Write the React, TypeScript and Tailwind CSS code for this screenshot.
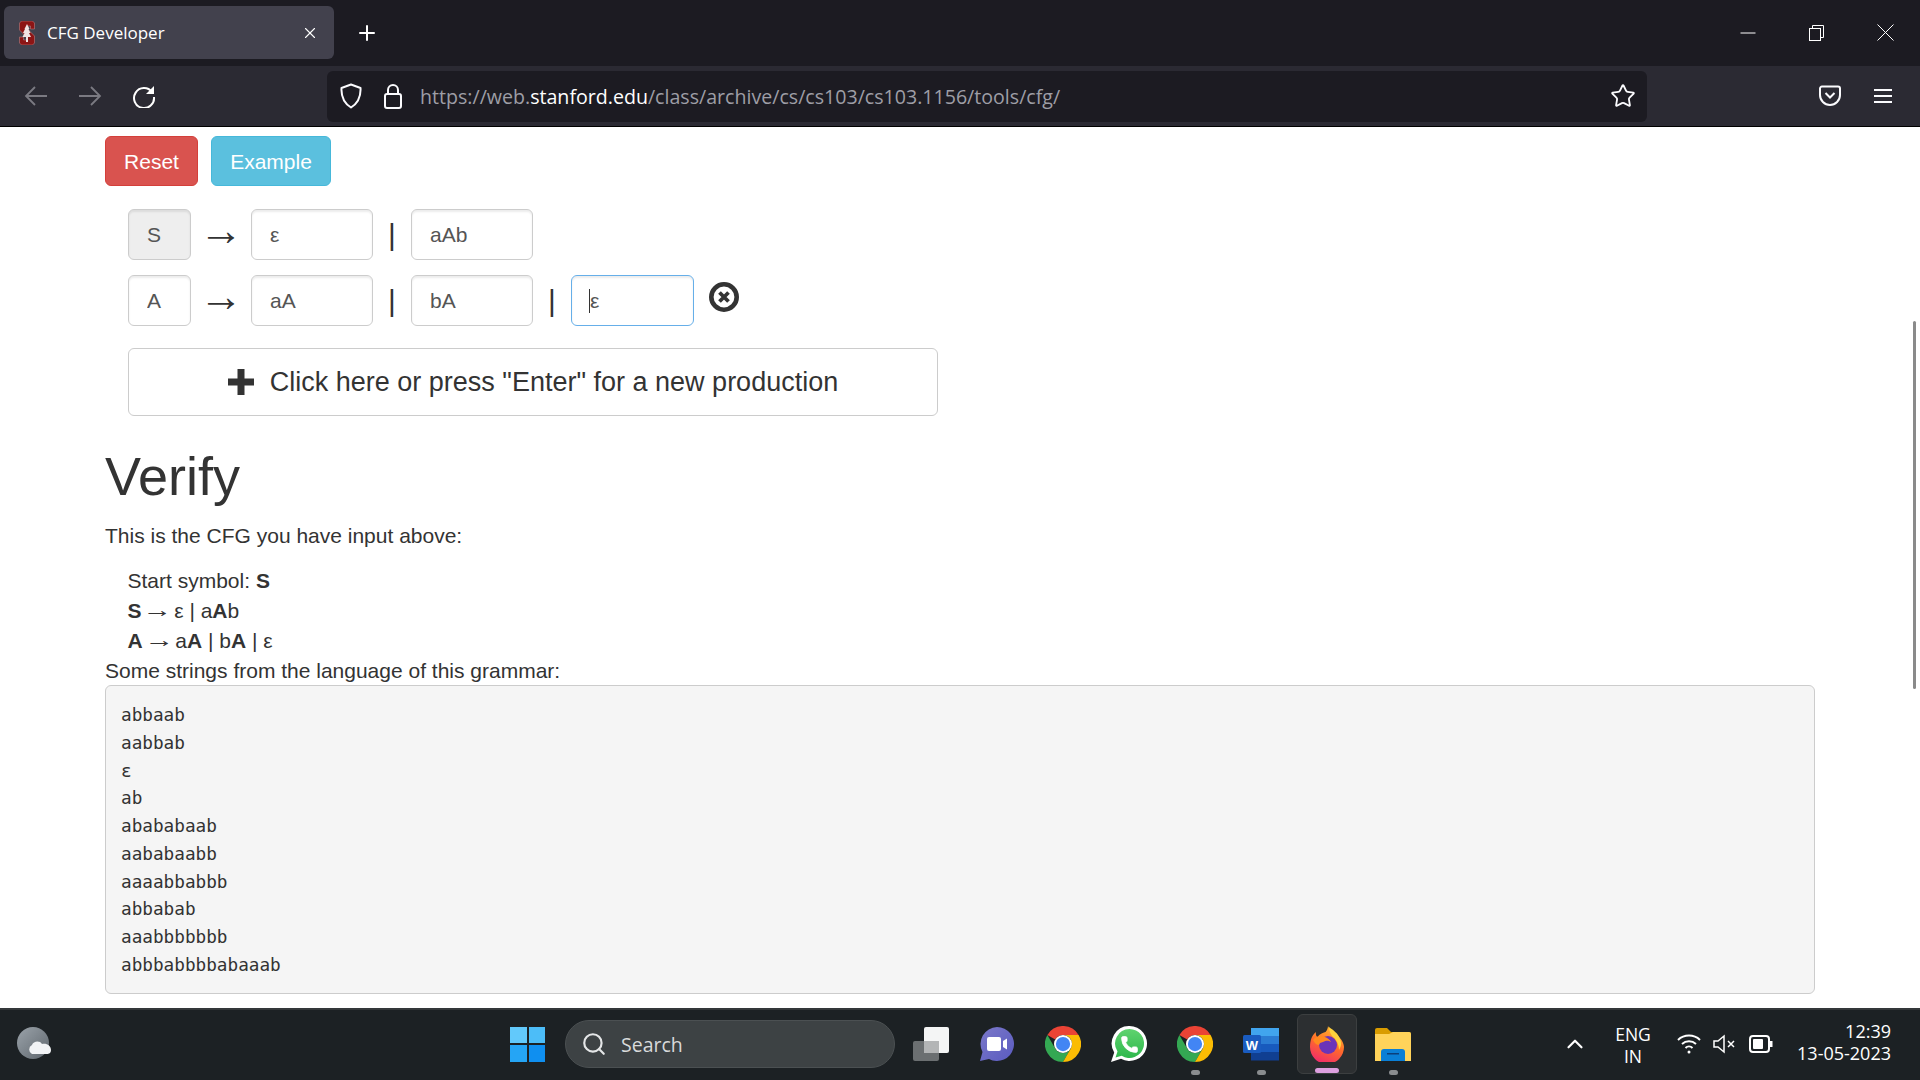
import React from 'react';
import { Phone, Search, Star, X, Plus, ChevronUp } from 'lucide-react';

const strings = [
  'abbaab',
  'aabbab',
  'ε',
  'ab',
  'abababaab',
  'aababaabb',
  'aaaabbabbb',
  'abbabab',
  'aaabbbbbbb',
  'abbbabbbbabaaab',
];

const fieldClass =
  'h-[51px] w-[122px] rounded-[6px] border border-[#ccc] bg-white px-[18px] text-[21px] text-[#555] shadow-[inset_0_2px_2px_rgba(0,0,0,0.075)] outline-none';

const Arrow = () => (
  <span className="w-[60px] text-center text-[44px] leading-[42px] font-light text-[#333]">→</span>
);
const Bar = () => <span className="w-[38px] text-center text-[30px] leading-[51px] text-[#333]">|</span>;
// the arrow glyph in the reference is wider than its advance suggests
const InlineArrow = () => <span className="mr-[5.830px] inline-block -translate-y-px scale-x-[1.4]">→</span>;

const StanfordIcon = () => (
  <svg width="16" height="24" viewBox="0 0 15 24">
    <path d="M2 0h11l2 2v6h-4V5H8v3l7 7v7l-2 2H2l-2-2v-6h4v3h3v-3L0 9V2z" fill="#8c1515" stroke="#c98a8a" strokeWidth="0.500" />
    <path d="M7.500 3 10 8H9l2 4h-1.500l2 4H8.500v5h-2v-5H3l2-4H3.500l2-4H5z" fill="#f0e4e4" />
  </svg>
);

const ChromeIcon = () => (
  <svg width="36" height="36" viewBox="0 0 48 48">
    <path d="M3.200 12A24 24 0 0 1 44.800 12H24A12 12 0 0 0 13.600 18z" fill="#ea4335" />
    <path d="M3.200 12 13.600 30A12 12 0 0 0 34.400 30L24 48A24 24 0 0 1 3.200 12z" fill="#34a853" />
    <path d="M44.800 12H24A12 12 0 0 1 34.400 30L24 48A24 24 0 0 0 44.800 12z" fill="#fbbc04" />
    <circle cx="24" cy="24" r="12" fill="#fff" />
    <circle cx="24" cy="24" r="9.500" fill="#4285f4" />
  </svg>
);

const TeamsIcon = () => (
  <svg width="36" height="36" viewBox="0 0 36 36">
    <defs>
      <linearGradient id="teamsFill" x1="0" y1="0" x2="1" y2="1">
        <stop offset="0" stopColor="#7b78c9" />
        <stop offset="1" stopColor="#5a5bc0" />
      </linearGradient>
    </defs>
    <path d="M18 1a17 17 0 1 1-8 32L1 35l2.500-9A17 17 0 0 1 18 1z" fill="url(#teamsFill)" />
    <rect x="8" y="11" width="14" height="14" rx="2" fill="#fff" />
    <path d="m24 15 4-2.500v11L24 21z" fill="#fff" />
  </svg>
);

const WhatsAppIcon = () => (
  <svg width="36" height="37" viewBox="0 0 36 37">
    <defs>
      <linearGradient id="waFill" x1="0" y1="0" x2="0" y2="1">
        <stop offset="0" stopColor="#5fd36f" />
        <stop offset="1" stopColor="#2fb84c" />
      </linearGradient>
    </defs>
    <path d="M18.500 0a17.500 17.500 0 1 1-8.500 32.800L0 36l3.200-9.500A17.500 17.500 0 0 1 18.500 0z" fill="#fff" />
    <path d="M18.500 3a14.500 14.500 0 1 1-7.800 26.700L4.500 31.500l2-6A14.500 14.500 0 0 1 18.500 3z" fill="url(#waFill)" />
    <Phone x="9" y="9" width="19" height="19" fill="#fff" stroke="#fff" strokeWidth={1} />
  </svg>
);

const WordIcon = () => (
  <svg width="36" height="33" viewBox="0 0 36 33">
    <rect x="8" y="0" width="28" height="8" fill="#41a5ee" />
    <rect x="8" y="8" width="28" height="8" fill="#2b7cd3" />
    <rect x="8" y="16" width="28" height="8" fill="#185abd" />
    <rect x="8" y="24" width="28" height="8.500" fill="#103f91" />
    <rect x="0" y="7" width="18" height="18" rx="1.500" fill="#1a5cc0" />
    <text x="9" y="21.500" textAnchor="middle" fontSize="13" fontWeight="700" fill="#fff" fontFamily="Liberation Sans, sans-serif">
      W
    </text>
  </svg>
);

const FirefoxIcon = () => (
  <svg width="36" height="36" viewBox="0 0 36 36">
    <defs>
      <linearGradient id="foxFill" x1="0.7" y1="0" x2="0.3" y2="1">
        <stop offset="0" stopColor="#ffbd2e" />
        <stop offset="0.5" stopColor="#ff6a2b" />
        <stop offset="1" stopColor="#f0286e" />
      </linearGradient>
    </defs>
    <path d="M19 0c1 3 5 5 8 8 6 5 8 10 8 13a17 17 0 0 1-34 0C1 14 3 9 7 6c-.5 3 .5 4 1.500 5 2-3 5-4 8-5 1.500-1.500 2.500-4 2.500-6z" fill="url(#foxFill)" />
    <circle cx="19" cy="19" r="9" fill="#6b34b8" />
    <path d="M4 14c3-4 8-5 12-3 3 1 5 3 6 5-3-2-5-1.500-8 0l-3 1-1 2c-2 0-4-1-6-5z" fill="#ff8a1f" />
    <path d="M20 1c4 3 9 6 11 12 2 4 1 8-1 11 0-6-3-11-7-14-2-3-3-6-3-9z" fill="#ffd23c" />
  </svg>
);

const FolderIcon = () => (
  <svg width="36" height="33" viewBox="0 0 36 33">
    <path d="M0 2a2 2 0 0 1 2-2h10l4 4h18a2 2 0 0 1 2 2v6H0z" fill="#d99c00" />
    <path d="M0 6h14l4-2h16a2 2 0 0 1 2 2v27H0z" fill="#ffd35a" />
    <path d="M6 33V24a3 3 0 0 1 3-3h18a3 3 0 0 1 3 3v9z" fill="#0a7fd6" />
    <rect x="12" y="25" width="12" height="1.500" fill="#0b3f7a" />
  </svg>
);

// items on the taskbar are all 66px slots, with the running dot under them
const TaskItem = ({ children, dot }: { children: React.ReactNode; dot?: boolean }) => (
  <div className="relative flex h-[60px] w-[66px] items-center justify-center">
    {children}
    {dot && <span className="absolute -bottom-[1px] h-[5px] w-[9px] rounded-full bg-[#8a8d8f]" />}
  </div>
);

const App = () => {
  return (
    <div className="flex h-screen w-full flex-col overflow-hidden bg-white font-['Liberation_Sans',sans-serif] text-[21px] leading-[30px] text-[#333]">
      {/* Tab strip */}
      <div className="flex h-[66px] shrink-0 items-center bg-[#1c1b22] pl-[4px] pb-[1px] font-['Open_Sans',sans-serif]">
        <div className="flex h-[53px] w-[330px] items-center rounded-[6px] bg-[#42414d] pl-[15px] pr-[15px] text-white">
          <StanfordIcon />
          <span className="ml-[12px] flex-1 text-[17px]">CFG Developer</span>
          <X size={18} strokeWidth={1.500} />
        </div>
        <Plus size={24} strokeWidth={2} className="ml-[21px] text-white" />
        <div className="ml-auto flex items-center pr-[26px] text-white">
          <svg width="16" height="16" viewBox="0 0 16 16" className="mr-[53px]">
            <path d="M0.500 8h15" stroke="#fff" strokeWidth="1" />
          </svg>
          <svg width="15" height="16" viewBox="0 0 15 16" className="mr-[53px]" fill="none" stroke="#fff" strokeWidth="1">
            <rect x="0.500" y="3.500" width="11" height="12" />
            <path d="M3.500 3.500v-3h11v12h-3" />
          </svg>
          <svg width="17" height="17" viewBox="0 0 17 17">
            <path d="M0.500 0.500l16 16M16.500 0.500l-16 16" stroke="#fff" strokeWidth="1" />
          </svg>
        </div>
      </div>

      {/* Toolbar */}
      <div className="flex h-[61px] shrink-0 items-center border-b border-black bg-[#2b2a33] font-['Open_Sans',sans-serif]">
        <svg width="24" height="24" viewBox="0 0 24 24" fill="none" stroke="#7b7a82" strokeWidth="1.800" className="ml-[24px]">
          <path d="M23 12H2M11 3l-9 9 9 9" />
        </svg>
        <svg width="24" height="24" viewBox="0 0 24 24" fill="none" stroke="#7b7a82" strokeWidth="1.800" className="ml-[30px]">
          <path d="M1 12h21M13 3l9 9-9 9" />
        </svg>
        <svg width="24" height="24" viewBox="0 0 24 24" fill="none" stroke="#fff" strokeWidth="2" className="ml-[30px]">
          <path d="M20 8A10 10 0 1 0 22 13" />
          <path d="M22 2v8h-8z" fill="#fff" stroke="none" />
        </svg>
        <div className="ml-[171px] flex h-[51px] w-[1320px] items-center rounded-[6px] bg-[#1c1b22] pl-[13px] pr-[11px]">
          <svg width="22" height="26" viewBox="0 0 22 26" fill="none" stroke="#fbfbfe" strokeWidth="2">
            <path d="M11 1.500 20.500 5c.5 9-2.500 15-9.500 19.500C4 20 1 14 1.500 5z" strokeLinejoin="round" />
          </svg>
          <svg width="18" height="25" viewBox="0 0 18 25" fill="none" stroke="#fbfbfe" strokeWidth="2" className="ml-[22px]">
            <rect x="1" y="10" width="16" height="14" rx="2" />
            <path d="M4 10V6a5 5 0 0 1 10 0v4" />
          </svg>
          <span className="ml-[18px] pt-[2px] text-[19.600px] whitespace-nowrap text-[#9e9ea6]">
            https://web.<span className="text-white">stanford.edu</span>/class/archive/cs/cs103/cs103.1156/tools/cfg/
          </span>
          <Star size={26} strokeWidth={1.700} className="ml-auto text-[#fbfbfe]" />
        </div>
        <svg width="22" height="22" viewBox="0 0 22 22" fill="none" stroke="#fbfbfe" strokeWidth="2" className="ml-[172px]">
          <path d="M3 1.500h16A2 2 0 0 1 21 3.500V10a10 10 0 0 1-20 0V3.500a2 2 0 0 1 2-2z" />
          <path d="m6.500 8 4.500 4.500L15.500 8" />
        </svg>
        <svg width="18" height="16" viewBox="0 0 18 16" stroke="#fbfbfe" strokeWidth="2" className="ml-[33px]">
          <path d="M0 2h18M0 8h18M0 14h18" />
        </svg>
      </div>

      {/* Page */}
      <main className="relative min-h-0 flex-1 overflow-hidden pt-[9px] pl-[105px] pr-[105px]">
        <div className="flex gap-[13px]">
          <button className="h-[50px] w-[93px] rounded-[6px] border border-[#d43f3a] bg-[#d9534f] pt-[1px] text-white">Reset</button>
          <button className="h-[50px] w-[120px] rounded-[6px] border border-[#46b8da] bg-[#5bc0de] pt-[1px] text-white">Example</button>
        </div>

        <div className="mt-[23px] ml-[23px] flex">
          <input readOnly value="S" className={`${fieldClass} !w-[63px] !bg-[#eee]`} />
          <Arrow />
          <input readOnly value="ε" className={fieldClass} />
          <Bar />
          <input readOnly value="aAb" className={fieldClass} />
        </div>

        <div className="mt-[15px] ml-[23px] flex">
          <input readOnly value="A" className={`${fieldClass} !w-[63px]`} />
          <Arrow />
          <input readOnly value="aA" className={fieldClass} />
          <Bar />
          <input readOnly value="bA" className={fieldClass} />
          <Bar />
          <div className="relative">
            <input
              readOnly
              value="ε"
              className={`${fieldClass} !w-[123px] !border-[#66afe9] shadow-[inset_0_1px_1px_rgba(0,0,0,0.075),0_0_8px_rgba(102,175,233,0.6)]`}
            />
            <span className="absolute top-[14px] left-[18px] h-[24px] w-px bg-[#333]" />
          </div>
          <svg width="30" height="30" viewBox="0 0 30 30" className="mt-[7px] ml-[15px]">
            <circle cx="15" cy="15" r="12.700" fill="none" stroke="#333" strokeWidth="4.600" />
            <path d="m10.500 10.500 9 9M19.500 10.500l-9 9" stroke="#333" strokeWidth="3.800" />
          </svg>
        </div>

        <button className="mt-[22px] ml-[23px] flex h-[68px] w-[810px] items-center justify-center gap-[16px] rounded-[6px] border border-[#ccc] bg-white text-[27px] text-[#333]">
          <svg width="26" height="26" viewBox="0 0 26 26">
            <path d="M9.500 0h7v9.500H26v7h-9.500V26h-7v-9.500H0v-7h9.500z" fill="#333" />
          </svg>
          Click here or press "Enter" for a new production
        </button>

        <h1 className="mt-[31px] mb-[15px] text-[54px] leading-[59.400px] font-normal">Verify</h1>
        <p className="mb-[15px]">This is the CFG you have input above:</p>
        <div className="pl-[22.500px]">
          <div>
            Start symbol: <b>S</b>
          </div>
          <div>
            <b>S</b> <InlineArrow />
            ε | a<b>A</b>b
          </div>
          <div>
            <b>A</b> <InlineArrow />
            a<b>A</b> | b<b>A</b> | ε
          </div>
        </div>
        <div>Some strings from the language of this grammar:</div>
        <pre className="-mt-[1px] h-[309px] rounded-[6px] border border-[#ccc] bg-[#f5f5f5] pt-[15.500px] pl-[15px] font-['DejaVu_Sans_Mono',monospace] text-[17.700px] leading-[27.800px] text-[#333]">
          {strings.join('\n')}
        </pre>

        {/* overlay scrollbar */}
        <div className="absolute top-[194px] right-[4px] h-[368px] w-[3px] rounded-full bg-[#8a8a8a]" />
      </main>

      {/* Taskbar */}
      <div className="flex h-[72px] shrink-0 items-center border-t-2 border-[#34383a] bg-[#1c2124] pb-[2px] font-['Open_Sans',sans-serif] text-white">
        <svg width="36" height="34" viewBox="0 0 36 34" className="ml-[17px]">
          <defs>
            <linearGradient id="moonFill" x1="0" y1="0" x2="1" y2="1">
              <stop offset="0" stopColor="#9ba3aa" />
              <stop offset="1" stopColor="#5e666d" />
            </linearGradient>
          </defs>
          <circle cx="16" cy="16" r="16" fill="url(#moonFill)" />
          <path d="M15 27a5 5 0 0 1 0-9c1-4 8-5 10-1 5-1 9 2 9 6s-3 4-5 4z" fill="#f2f4f6" />
        </svg>

        <div className="ml-[457px] grid h-[35px] w-[35px] grid-cols-2 gap-[2px]">
          <span className="bg-[#62c9fb]" />
          <span className="bg-[#4cbdf8]" />
          <span className="bg-[#25a5f5]" />
          <span className="bg-[#0f8ff0]" />
        </div>

        <div className="ml-[20px] flex h-[48px] w-[330px] items-center rounded-full border border-[#4b5052] bg-[#3d4244] pl-[15px] text-[19.500px] text-[#d8dadb]">
          <Search size={26} strokeWidth={2} className="text-[#e4e6e7]" />
          <span className="ml-[14px] pt-[2px]">Search</span>
        </div>

        <div className="ml-[3px] flex items-center">
          <TaskItem>
            <svg width="36" height="34" viewBox="0 0 36 34">
              <rect x="0" y="14" width="26" height="20" rx="2" fill="#6b6f71" />
              <rect x="11" y="0" width="25" height="26" rx="2" fill="#f4f5f5" />
              <rect x="11" y="14" width="15" height="12" fill="#b3b5b6" />
            </svg>
          </TaskItem>
          <TaskItem>
            <TeamsIcon />
          </TaskItem>
          <TaskItem>
            <ChromeIcon />
          </TaskItem>
          <TaskItem>
            <WhatsAppIcon />
          </TaskItem>
          <TaskItem dot>
            <ChromeIcon />
          </TaskItem>
          <TaskItem dot>
            <WordIcon />
          </TaskItem>
          <div className="relative mx-[3px] flex h-[60px] w-[60px] items-center justify-center rounded-[6px] border border-[#3c3f40] bg-[#2c2f31]">
            <FirefoxIcon />
            <span className="absolute bottom-[0px] h-[5px] w-[24px] rounded-full bg-[#dea0e0]" />
          </div>
          <TaskItem dot>
            <FolderIcon />
          </TaskItem>
        </div>

        <ChevronUp size={26} strokeWidth={2} className="ml-[136px]" />
        <div className="ml-[24px] w-[42px] pt-[2px] text-center text-[17.500px] leading-[22px]">
          <div>ENG</div>
          <div>IN</div>
        </div>
        <svg width="24" height="22" viewBox="0 0 24 22" fill="none" stroke="#fff" strokeWidth="2" className="ml-[23px]">
          <path d="M1 7a16 16 0 0 1 22 0M5 11a10.500 10.500 0 0 1 14 0M8.500 15a5 5 0 0 1 7 0" />
          <circle cx="12" cy="19" r="1.500" fill="#fff" stroke="none" />
        </svg>
        <svg width="22" height="20" viewBox="0 0 22 20" fill="none" stroke="#fff" strokeWidth="1.500" className="ml-[12px]">
          <path d="M1 7v6h4l6 5V2L5 7zM15 7l6 6M21 7l-6 6" />
        </svg>
        <svg width="24" height="18" viewBox="0 0 24 18" className="ml-[14px]">
          <rect x="1" y="1" width="19" height="16" rx="3" fill="none" stroke="#fff" strokeWidth="2" />
          <rect x="4" y="4" width="10" height="10" rx="1" fill="#fff" />
          <rect x="21" y="6" width="2.500" height="6" fill="#fff" />
        </svg>
        <div className="mr-[29px] mb-[4px] ml-auto text-right text-[18px] leading-[22px]">
          <div>12:39</div>
          <div>13-05-2023</div>
        </div>
      </div>
    </div>
  );
};

export default App;
